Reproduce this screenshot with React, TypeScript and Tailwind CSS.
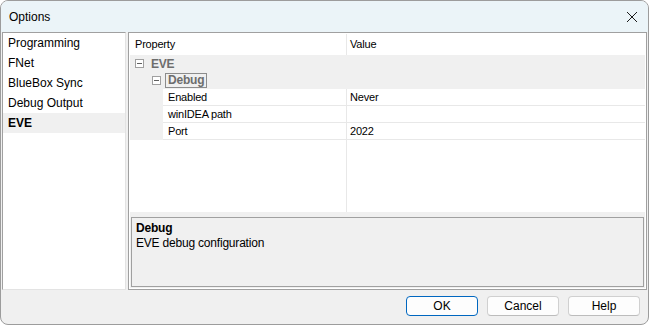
import React from "react";

function MinusBox() {
  return (
    <span className="flex items-center justify-center w-[9px] h-[9px] border border-[#a0a0a0] bg-white">
      <span className="block w-[5px] h-[1px] bg-[#606060]" />
    </span>
  );
}

const pages = ["Programming", "FNet", "BlueBox Sync", "Debug Output", "EVE"];

const props = [
  { name: "Enabled", value: "Never" },
  { name: "winIDEA path", value: "" },
  { name: "Port", value: "2022" },
];

export default function App() {
  return (
    <div className="w-[649px] h-[325px] rounded-[8px] border border-[#9c9c9c] bg-[#f0f0f0] overflow-hidden flex flex-col font-['Liberation_Sans',Arial,sans-serif] text-[#000]">
      {/* title bar */}
      <div className="h-[31px] shrink-0 bg-[#ebf4f8] flex items-center justify-between pl-[8px] pr-[10px]">
        <span className="text-[12px]">Options</span>
        <svg width="12" height="12" viewBox="0 0 12 12">
          <path d="M1 1 L11 11 M11 1 L1 11" stroke="#1a1a1a" strokeWidth="1" />
        </svg>
      </div>

      {/* body */}
      <div className="h-[258px] shrink-0 flex gap-[2px] pl-[1px] pr-[1px]">
        <div className="w-[124px] shrink-0 bg-white border-l border-t border-[#a0a0a0] border-r-[#e3e3e3] border-b-[#e3e3e3] border-r border-b">
          {pages.map((p) => (
            <div
              key={p}
              className={`h-[20px] flex items-center pl-[5px] text-[12px] ${p === "EVE" ? "bg-[#f0f0f0] font-bold" : ""}`}
            >
              {p}
            </div>
          ))}
        </div>

        <div className="flex-1 border border-[#a0a0a0] p-[1px] bg-white flex flex-col text-[11px] tracking-[-0.2px]">
          {/* grid */}
          <div className="flex-1 flex flex-col">
            <div className="h-[21px] flex shrink-0">
              <div className="w-[217px] border-r border-[#e8e8e8] flex items-center pl-[5px]">Property</div>
              <div className="flex-1 flex items-center pl-[3px]">Value</div>
            </div>
            <div className="h-[17px] bg-[#f0f0f0] flex items-center pl-[5px] gap-[7px]">
              <MinusBox />
              <span className="font-bold text-[#6d6d6d] text-[12px]">EVE</span>
            </div>
            <div className="h-[17px] bg-[#f0f0f0] flex items-center pl-[22px] gap-[4px]">
              <MinusBox />
              <span className="font-bold text-[#6d6d6d] text-[12px] border border-[#8c8c8c] px-[2px] leading-[13px]">Debug</span>
            </div>
            {props.map((r) => (
              <div key={r.name} className="h-[17px] flex">
                <div className="w-[33px] bg-[#f0f0f0]" />
                <div className="w-[184px] border-r border-b border-[#e8e8e8] flex items-center pl-[5px]">{r.name}</div>
                <div className="flex-1 border-b border-[#e8e8e8] flex items-center pl-[3px]">{r.value}</div>
              </div>
            ))}
            <div className="flex-1 flex">
              <div className="w-[217px] border-r border-[#e8e8e8]" />
            </div>
          </div>
          {/* description */}
          <div className="shrink-0 bg-[#f0f0f0] pt-[5px] px-[1px] pb-[1px]">
            <div className="h-[70px] border border-[#a0a0a0] px-[4px] pt-[3px]">
              <div className="font-bold text-[12px] leading-[15px]">Debug</div>
              <div className="text-[12px] leading-[15px]">EVE debug configuration</div>
            </div>
          </div>
        </div>
      </div>

      {/* buttons */}
      <div className="flex-1 flex justify-end items-start gap-[9px] pt-[6px] pr-[8px]">
        <button className="w-[72px] h-[20px] rounded-[4px] border border-[#0067c0] bg-[#fdfdfd] text-[12px]">OK</button>
        <button className="w-[72px] h-[20px] rounded-[4px] border border-[#d0d0d0] border-b-[#bcbcbc] bg-[#fdfdfd] text-[12px]">Cancel</button>
        <button className="w-[72px] h-[20px] rounded-[4px] border border-[#d0d0d0] border-b-[#bcbcbc] bg-[#fdfdfd] text-[12px]">Help</button>
      </div>
    </div>
  );
}
